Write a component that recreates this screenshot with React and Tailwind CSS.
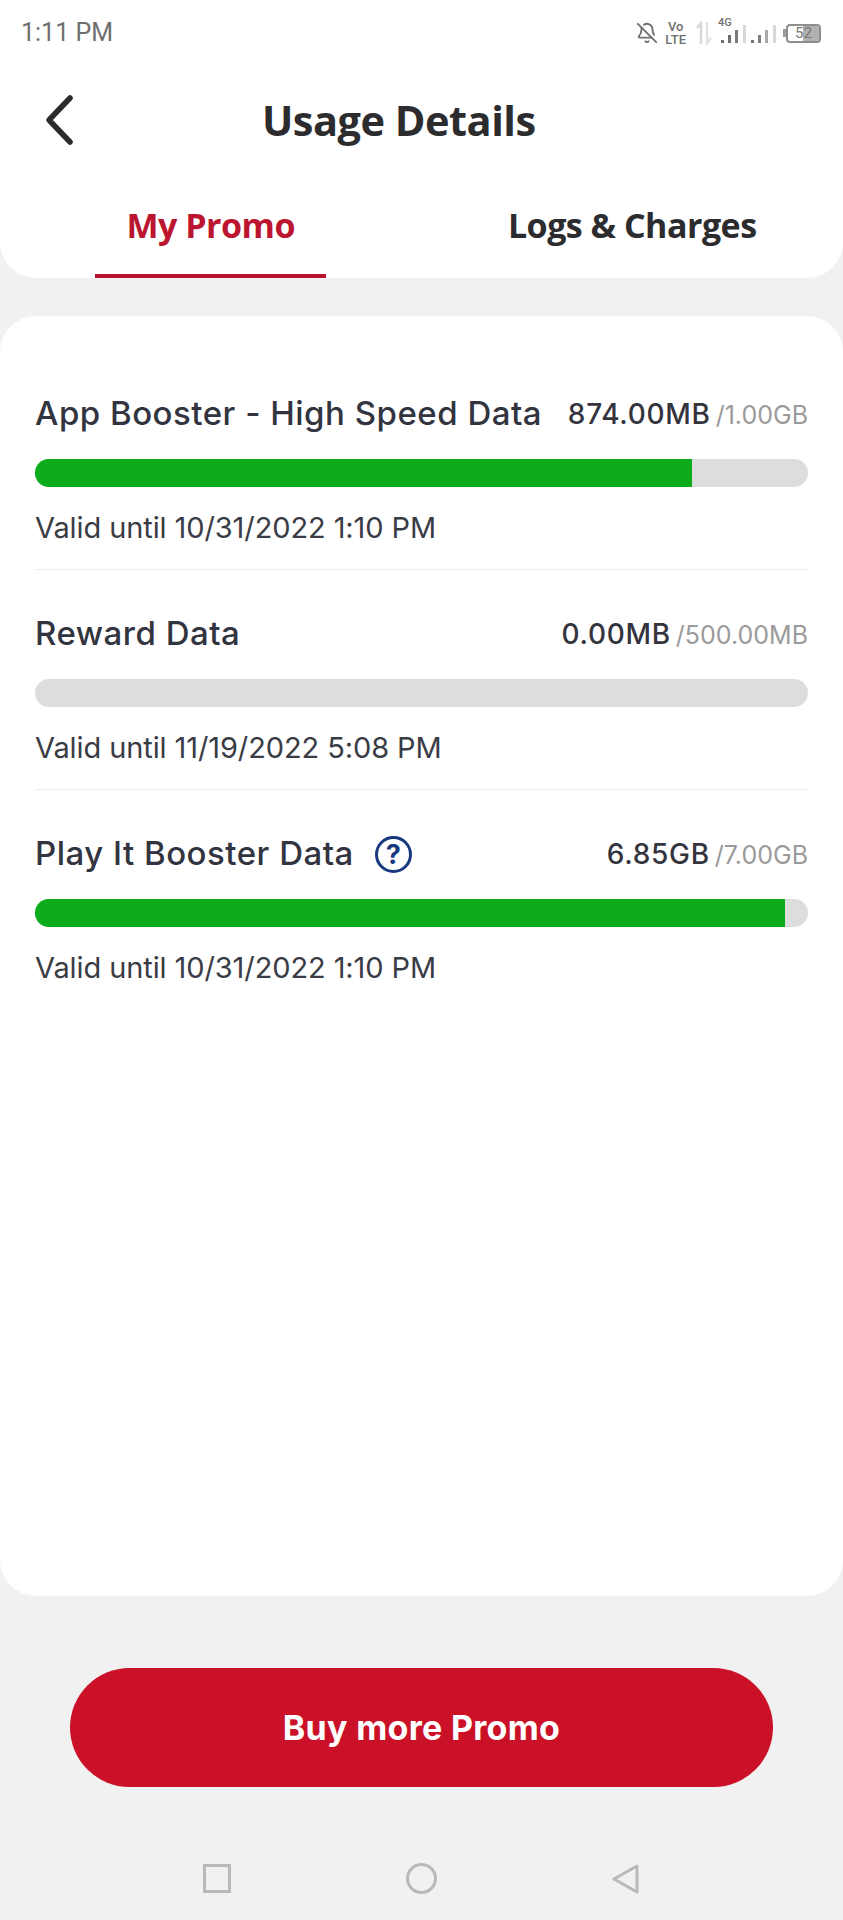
import React from 'react';
import { BellOff } from 'lucide-react';

const promos = [
  { name: 'App Booster - High Speed Data', used: '874.00MB', total: '1.00GB', fill: 'w-[85%]', valid: 'Valid until 10/31/2022 1:10 PM' },
  { name: 'Reward Data', used: '0.00MB', total: '500.00MB', fill: 'w-0', valid: 'Valid until 11/19/2022 5:08 PM' },
  { name: 'Play It Booster Data', used: '6.85GB', total: '7.00GB', fill: 'w-[97%]', valid: 'Valid until 10/31/2022 1:10 PM', help: true },
];

const Signal = ({ first, second, third }) => (
  <svg width="26" height="20" viewBox="0 0 26 20">
    <rect x="1" y="15" width="3" height="3" fill={first} />
    <rect x="8" y="10" width="3" height="8" fill={second} />
    <rect x="15" y="5" width="3" height="13" fill={third} />
    <rect x="23" y="0" width="3" height="18" fill="#d8d8d8" />
  </svg>
);

const StatusBar = () => (
  <div className="h-[64px] flex items-center justify-between pl-[21px] pr-[22px] pt-[2px]">
    <span className="text-[25px] text-[#6f6f6f] font-['Roboto',sans-serif]">1:11 PM</span>
    <div className="flex items-center text-[#6f6f6f] font-['Roboto',sans-serif]">
      <BellOff className="w-[22px] h-[24px] text-[#6f6f6f] mr-[7px]" strokeWidth={2} />
      <div className="flex flex-col items-center text-[13px] leading-[13px] font-medium mr-[10px]">
        <span>Vo</span>
        <span>LTE</span>
      </div>
      <svg width="16" height="24" viewBox="0 0 16 24" className="mr-[8px]">
        <path d="M5 23V2L1 7" fill="none" stroke="#d8d8d8" strokeWidth="2.5" />
        <path d="M11 1V22L15 17" fill="none" stroke="#e2e2e2" strokeWidth="2.5" />
      </svg>
      <div className="relative w-[26px] h-[24px] mr-[4px] flex items-end">
        <span className="absolute -top-[4px] -left-[2px] text-[11px] leading-[11px] font-medium">4G</span>
        <Signal first="#6f6f6f" second="#6f6f6f" third="#7a7a7a" />
      </div>
      <div className="h-[24px] mr-[7px] flex items-end">
        <Signal first="#707070" second="#808080" third="#a8a8a8" />
      </div>
      <span className="w-[3px] h-[8px] bg-[#9a9a9a]" />
      <div className="relative w-[35px] h-[19px] border-2 border-[#8d8d8d] rounded-[4px] flex items-center justify-center text-[15px] text-[#777] overflow-hidden">
        <span className="absolute right-0 top-0 bottom-0 w-[16px] bg-[#b0b0b0]" />
        <span className="relative leading-none">52</span>
      </div>
    </div>
  </div>
);

const Header = () => (
  <div className="bg-white rounded-b-[36px] overflow-hidden">
    <StatusBar />
    <div className="h-[112px] flex items-center">
      <svg width="32" height="52" viewBox="0 0 32 52" className="ml-[43px]">
        <path d="M27 4L6 26L27 48" fill="none" stroke="#2b2b2b" strokeWidth="5.5" strokeLinecap="round" strokeLinejoin="round" />
      </svg>
      <h1 className="ml-[187px] text-[41.5px] font-bold text-[#2c2c2e] font-['Open_Sans',sans-serif] tracking-[-0.5px]">Usage Details</h1>
    </div>
    <div className="grid grid-cols-2 h-[102px]">
      <div className="flex justify-center">
        <div className="w-[231px] h-full flex items-center justify-center border-b-[4px] border-[#b9122f] text-[34px] font-bold text-[#bc1530] font-['Open_Sans',sans-serif] tracking-[-0.5px]">
          My Promo
        </div>
      </div>
      <div className="flex justify-center">
        <div className="h-full pb-[4px] flex items-center text-[34px] font-bold text-[#2c2c2e] font-['Open_Sans',sans-serif] tracking-[-0.5px]">
          Logs &amp; Charges
        </div>
      </div>
    </div>
  </div>
);

const HelpIcon = () => (
  <span className="ml-[21px] w-[37px] h-[37px] rounded-full border-[3px] border-[#17397f] flex items-center justify-center text-[27px] font-bold leading-none tracking-normal text-[#17397f]">
    ?
  </span>
);

const PromoRow = ({ promo, last }) => (
  <div className={last ? 'pt-[44px]' : 'pt-[44px] pb-[21px] border-b border-[#ececec]'}>
    <div className="h-[40px] flex items-center justify-between">
      <div className="flex items-center text-[33px] font-medium text-[#32343f] tracking-[0.5px]">
        <span>{promo.name}</span>
        {promo.help && <HelpIcon />}
      </div>
      <div className="flex items-baseline">
        <span className="text-[28px] font-medium text-[#33343d] tracking-[0.7px]">{promo.used}</span>
        <span className="text-[25px] text-[#9a9a9a] ml-[5px]">/{promo.total}</span>
      </div>
    </div>
    <div className="mt-[25px] h-[28px] rounded-full bg-[#dcdedd] overflow-hidden">
      <div className={`h-full bg-[#0cab19] ${promo.fill}`} />
    </div>
    <div className="mt-[21px] h-[40px] flex items-center text-[29px] text-[#3a3c45] tracking-[-0.1px]">{promo.valid}</div>
  </div>
);

const NavBar = () => (
  <div className="flex-1 flex items-center justify-between pl-[203px] pr-[204px] pt-[50px]">
    <span className="w-[28px] h-[29px] border-[3px] border-[#b9b9b9]" />
    <span className="w-[31px] h-[31px] rounded-full border-[3px] border-[#b9b9b9]" />
    <svg width="28" height="30" viewBox="0 0 28 30">
      <path d="M26 2L3 15L26 28Z" fill="none" stroke="#b9b9b9" strokeWidth="3" strokeLinejoin="round" />
    </svg>
  </div>
);

export default function App() {
  return (
    <div className="w-[843px] h-[1920px] bg-[#f1f1f1] flex flex-col font-['Inter',sans-serif]">
      <Header />
      <div className="mt-[38px] flex-1 bg-white rounded-[36px] px-[35px] pt-[34px]">
        {promos.map((p, i) => (
          <PromoRow key={p.name} promo={p} last={i === promos.length - 1} />
        ))}
      </div>
      <div className="h-[324px] flex flex-col">
        <button className="mt-[72px] mx-[70px] h-[119px] rounded-full bg-[#cb1127] text-white text-[34px] font-bold tracking-[0.3px]">
          Buy more Promo
        </button>
        <NavBar />
      </div>
    </div>
  );
}
